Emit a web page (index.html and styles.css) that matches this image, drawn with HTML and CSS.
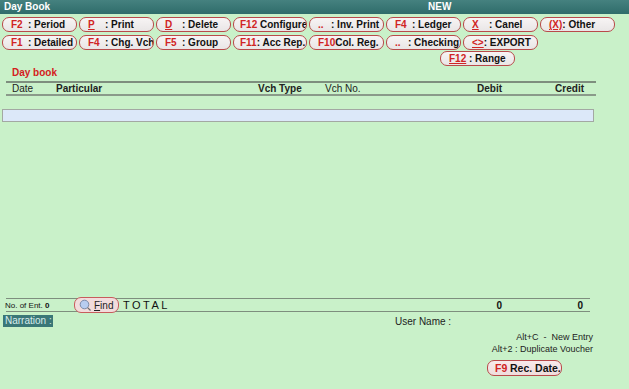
FILE: index.html
```html
<!DOCTYPE html>
<html lang="en">

    <head>
        <meta charset="UTF-8">
        <meta name="viewport" content="width=device-width, initial-scale=1.0">
        <title>Day Book</title>
        <link rel="stylesheet" href="styles.css">
    </head>

    <body>
        <div class="titlebar">
            <span class="title">Day Book</span>
            <span class="mode">NEW</span>
        </div>

        <div class="toolbar">
            <div class="btn-row">
                <button class="key-btn"><span class="key">F2</span>: Period</button>
                <button class="key-btn"><span class="key u">P</span>: Print</button>
                <button class="key-btn"><span class="key u">D</span>: Delete</button>
                <button class="key-btn short"><span class="key tight">F12</span> Configure</button>
                <button class="key-btn"><span class="key dots">..</span>: Inv. Print</button>
                <button class="key-btn"><span class="key">F4</span>: Ledger</button>
                <button class="key-btn"><span class="key u">X</span>: Canel</button>
                <button class="key-btn"><span class="key tight"><u>(X)</u></span>: Other</button>
            </div>
            <div class="btn-row">
                <button class="key-btn"><span class="key">F1</span>: Detailed</button>
                <button class="key-btn"><span class="key">F4</span>: Chg. Vch</button>
                <button class="key-btn"><span class="key">F5</span>: Group</button>
                <button class="key-btn short"><span class="key tight">F11</span>: Acc Rep.</button>
                <button class="key-btn"><span class="key tight">F10</span>Col. Reg.</button>
                <button class="key-btn"><span class="key dots">..</span>: Checking</button>
                <button class="key-btn"><span class="key tight u">&lt;&gt;</span>: EXPORT</button>
            </div>
            <div class="btn-row range-row">
                <button class="key-btn"><span class="key tight u">F12</span> : Range</button>
            </div>
        </div>

        <div class="section-title">Day book</div>

        <div class="grid-head">
            <span class="col-date">Date</span>
            <span class="col-part b">Particular</span>
            <span class="col-type b">Vch Type</span>
            <span class="col-no">Vch No.</span>
            <span class="col-debit b">Debit</span>
            <span class="col-credit b">Credit</span>
        </div>

        <div class="grid-row"></div>

        <div class="grid-space"></div>

        <div class="totals">
            <span class="ent">No. of Ent. <b>0</b></span>
            <button class="find-btn">
                <svg width="12" height="12" viewBox="0 0 12 12">
                    <circle cx="5.5" cy="5.5" r="4.3" fill="#b8cdf0" stroke="#7a8aa8" stroke-width="1"/>
                    <line x1="8.6" y1="8.6" x2="11.5" y2="11.5" stroke="#6a6a6a" stroke-width="1.2"/>
                </svg>
                <span><u>F</u>ind</span>
            </button>
            <span class="total-label">TOTAL</span>
            <span class="col-debit b">0</span>
            <span class="col-credit b">0</span>
        </div>

        <div class="footer">
            <span class="narration">Narration :</span>
            <span class="user">User Name :</span>
        </div>

        <div class="hints">
            <div>Alt+C &nbsp;- &nbsp;New Entry</div>
            <div>Alt+2 : Duplicate Voucher</div>
        </div>

        <div class="rec-row">
            <button class="key-btn rec"><span class="key">F9</span>Rec. Date.</button>
        </div>
    </body>

</html>
```

FILE: styles.css
```css
body {
    margin: 0;
    width: 629px;
    height: 389px;
    overflow: hidden;
    background-color: #c9f1c9;
    font-family: "Liberation Sans", Arial, sans-serif;
    font-size: 10px;
    color: #111;
}

.titlebar {
    height: 14px;
    background: linear-gradient(#45817f, #2f6c6a);
    color: white;
    font-weight: bold;
    font-size: 10px;
    line-height: 14px;
    display: flex;
}

.title {
    padding-left: 4px;
    width: 424px;
}

.toolbar {
    padding: 3px 0 0 2px;
}

.btn-row {
    display: flex;
    gap: 2px;
    margin-bottom: 3px;
}

.range-row {
    margin: -2px 0 0 438px;
}

.key-btn {
    width: 75px;
    height: 15px;
    padding: 0 0 0 7px;
    margin: 0;
    border: 1px solid #b94a4a;
    border-radius: 7px;
    background: linear-gradient(#f7f4f4, #e9e6e6);
    font-family: "Liberation Sans", Arial, sans-serif;
    font-size: 10px;
    font-weight: bold;
    line-height: 13px;
    color: #111;
    text-align: left;
    white-space: nowrap;
    overflow: hidden;
}

.key-btn.short {
    width: 74px;
    padding-left: 5px;
}

.key {
    display: inline-block;
    min-width: 17px;
    color: #d02424;
    padding-left: 1px;
}

.key.dots {
    min-width: 13px;
}

.key.tight {
    min-width: 0;
}

.key.u {
    text-decoration: underline;
}

.section-title {
    color: #d42020;
    font-weight: bold;
    margin: -1px 0 0 12px;
    height: 15px;
    line-height: 15px;
}

.grid-head {
    margin: 1px 33px 0 6px;
    height: 11px;
    border-top: 2px solid #7e8e7e;
    border-bottom: 2px solid #8a9a8a;
    display: flex;
    line-height: 11px;
    color: #222;
}

.b {
    font-weight: bold;
}

.col-date {
    width: 44px;
    padding-left: 6px;
}

.col-part {
    width: 202px;
}

.col-type {
    width: 67px;
}

.col-no {
    width: 110px;
}

.col-debit {
    width: 67px;
    text-align: right;
}

.col-credit {
    width: 82px;
    text-align: right;
}

.grid-row {
    margin: 13px 35px 0 2px;
    height: 11px;
    border: 1px solid #a3a8a3;
    background-color: #dce8f9;
}

.grid-space {
    height: 176px;
}

.totals {
    margin: 0 39px 0 6px;
    height: 12px;
    border-top: 1px solid #7e8e7e;
    border-bottom: 1px solid #7e8e7e;
    display: flex;
    align-items: center;
}

.ent {
    width: 69px;
    font-size: 8px;
    margin-left: -1px;
}

.find-btn {
    display: flex;
    align-items: center;
    gap: 3px;
    width: 45px;
    height: 16px;
    padding: 0 0 0 4px;
    margin: 0;
    border: 1px solid #c75c5c;
    border-radius: 7px;
    background-color: #f2dcdc;
    font-family: "Liberation Sans", Arial, sans-serif;
    font-size: 10px;
    color: #222;
}

.total-label {
    width: 299px;
    padding-left: 4px;
    font-size: 11px;
    letter-spacing: 2.5px;
}

.totals .col-debit {
    width: 80px;
}

.totals .col-credit {
    width: 81px;
}

.footer {
    margin-top: 3px;
    height: 12px;
    display: flex;
    align-items: flex-start;
}

.narration {
    margin-left: 3px;
    width: 50px;
    height: 12px;
    padding-left: 2px;
    box-sizing: border-box;
    background-color: #3a7777;
    color: #d8ecec;
    font-size: 10px;
    line-height: 12px;
}

.user {
    margin-left: 342px;
    margin-top: 1px;
    font-size: 10px;
    line-height: 11px;
    color: #222;
}

.hints {
    margin: 4px 36px 0 0;
    text-align: right;
    font-size: 9px;
    line-height: 12px;
    color: #222;
}

.rec-row {
    margin: 5px 0 0 487px;
}

.key-btn.rec {
    width: 75px;
    height: 16px;
    padding-left: 6px;
    font-size: 10.5px;
    background: linear-gradient(#f7eaea, #efdcdc);
}

.rec .key {
    min-width: 15px;
}
```
